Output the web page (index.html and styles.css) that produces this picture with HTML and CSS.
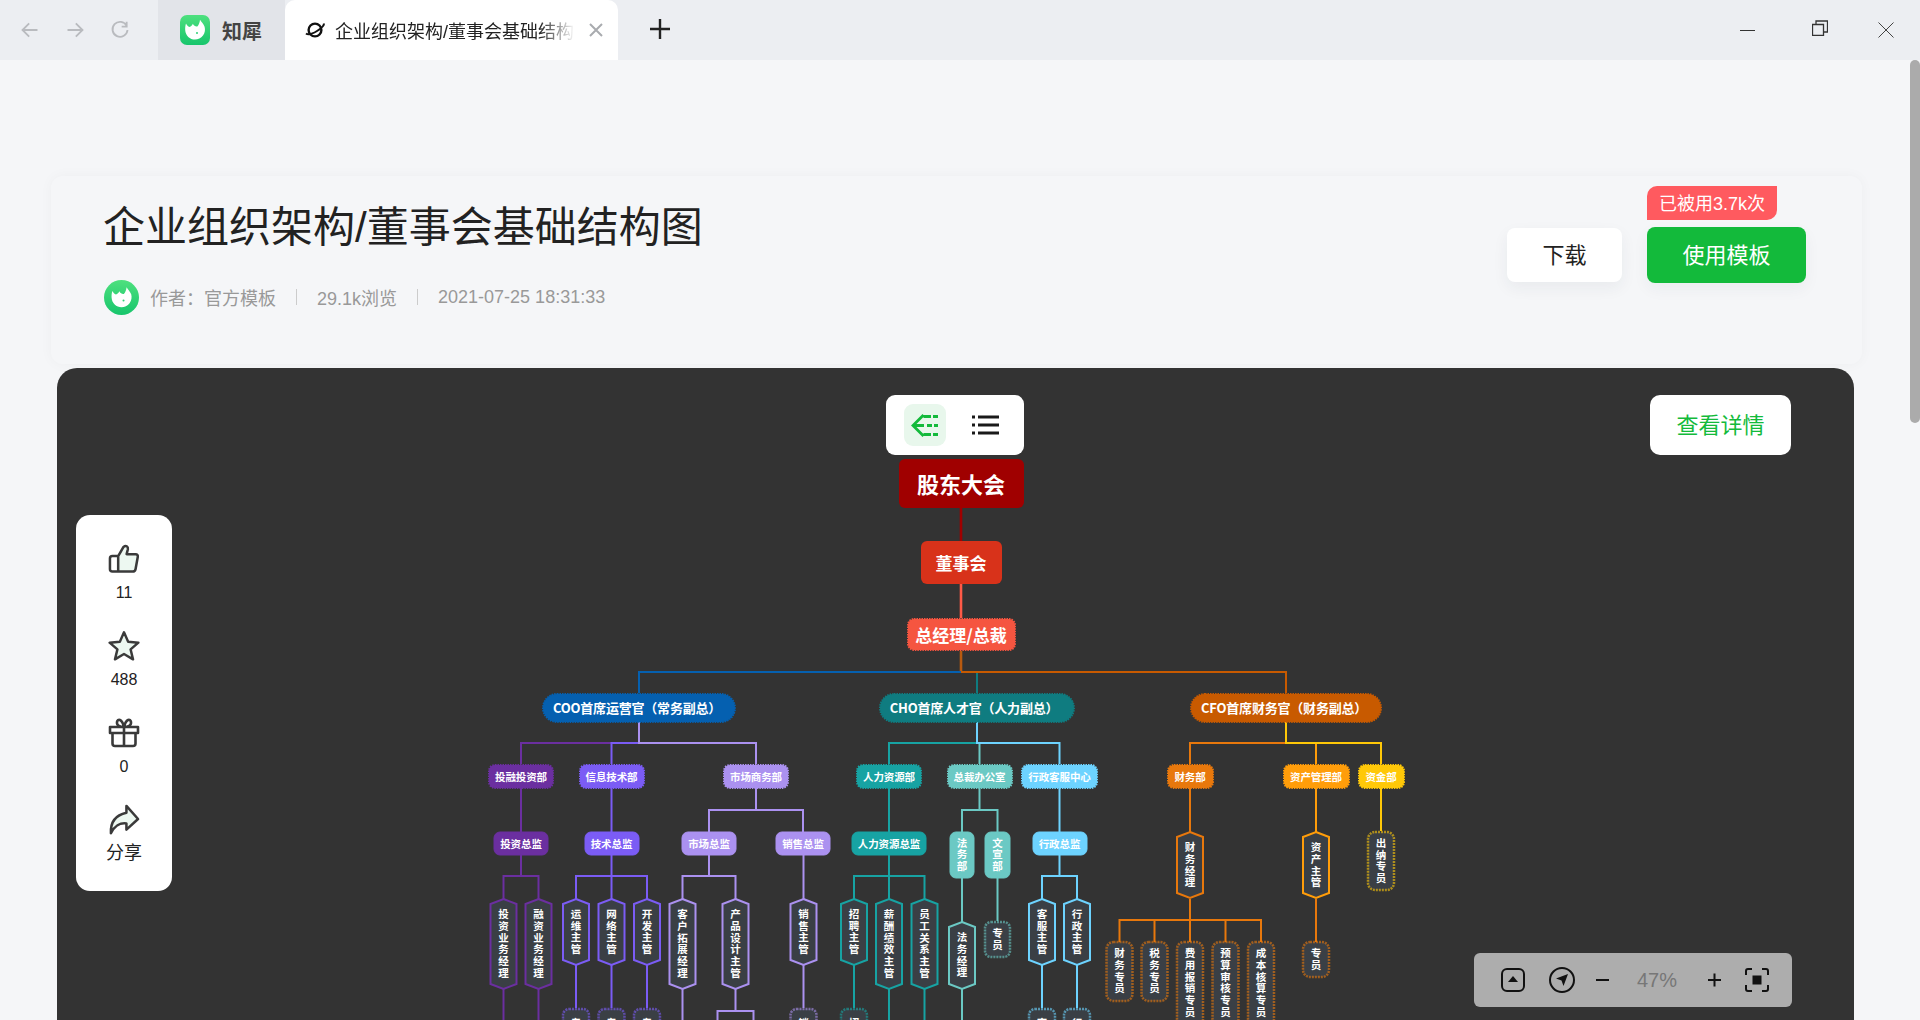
FILE: index.html
```html
<!DOCTYPE html>
<html lang="zh-CN">
<head>
<meta charset="utf-8">
<title>企业组织架构/董事会基础结构图</title>
<link rel="stylesheet" href="styles.css">
</head>
<body>
<svg class="defs" width="0" height="0" aria-hidden="true">
  <defs>
    <linearGradient id="lg" x1="0" y1="0" x2="0" y2="1"><stop offset="0" stop-color="#4ee07e"/><stop offset="1" stop-color="#17c56c"/></linearGradient>
    <symbol id="rhino" viewBox="0 0 30 30">
      <path fill="#fff" d="M6 8.500 C7 10.500 8 11.500 9.500 12 C11 11.500 12.200 10.500 12.800 8.800 C14 10.800 15.500 11.800 17.300 11.500 C18.800 10 19.800 7.500 20 4.800 C21.500 7 23.600 9.200 24.600 11.800 C25.400 14.600 25 18 23 20.600 C21 23.200 18 24.600 15 24.600 C10 24.600 5.400 20.600 5.200 15 C5.100 12.800 5.300 10.500 6 8.500 Z"/>
      <circle cx="17" cy="18" r="1" fill="#2fd278"/>
    </symbol>
  </defs>
</svg>

<header class="tabbar">
  <nav class="nav-btns">
    <svg class="nav-ic" viewBox="0 0 24 24"><path d="M21 12H4M11 4l-8 8 8 8"/></svg>
    <svg class="nav-ic" viewBox="0 0 24 24"><path d="M3 12h17M13 4l8 8-8 8"/></svg>
    <svg class="nav-ic" viewBox="0 0 24 24"><path d="M20 7A9 9 0 1 0 21 12M20 2v6h-6" /></svg>
  </nav>
  <div class="tab tab-home">
    <svg class="tab-logo" viewBox="0 0 30 30"><rect width="30" height="30" rx="7" fill="url(#lg)"/><use href="#rhino" width="30" height="30"/></svg>
    <span class="tab-home-label">知犀</span>
  </div>
  <div class="tab tab-active">
    <svg class="tab-fav" viewBox="0 0 20 20"><ellipse cx="10" cy="10" rx="6.400" ry="6.400" fill="none" stroke="#111" stroke-width="2.400"/><path d="M1 13.500C3 15 8 13.500 12 11s7-5.500 7-7.500" fill="none" stroke="#111" stroke-width="2"/></svg>
    <span class="tab-title">企业组织架构/董事会基础结构图</span>
    <svg class="tab-close" viewBox="0 0 14 14"><path d="M1 1l12 12M13 1L1 13"/></svg>
  </div>
  <svg class="tab-new" viewBox="0 0 20 20"><path d="M10 0v20M0 10h20"/></svg>
  <div class="win-btns">
    <svg class="win-ic win-min" viewBox="0 0 16 16"><path d="M0 8.500h15"/></svg>
    <svg class="win-ic win-restore" viewBox="0 0 16 16"><path d="M.5 4.500h11v11H.5zM4 4.500V1h11.500v11H11.500"/></svg>
    <svg class="win-ic win-close" viewBox="0 0 16 16"><path d="M.5.500l15 15M15.500.500l-15 15"/></svg>
  </div>
</header>

<main class="page">
  <section class="head-card">
    <div class="head-info">
      <h1 class="head-title">企业组织架构/董事会基础结构图</h1>
      <div class="meta">
        <svg class="meta-avatar" viewBox="0 0 30 30"><circle cx="15" cy="15" r="15" fill="url(#lg)"/><use href="#rhino" x="2" y="2" width="26" height="26"/></svg>
        <span>作者：官方模板</span><i class="meta-sep"></i><span>29.1k浏览</span><i class="meta-sep"></i><span class="meta-date">2021-07-25 18:31:33</span>
      </div>
    </div>
    <div class="head-actions">
      <button class="btn btn-plain">下载</button>
      <div class="use-wrap">
        <span class="used-badge">已被用3.7k次</span>
        <button class="btn btn-green">使用模板</button>
      </div>
    </div>
  </section>

  <section class="stage">
    <svg class="map" viewBox="57 368 1797 652" width="1797" height="652">
      <defs>
        <polygon id="h66" points="0,0 13,5 13,61 0,66 -13,61 -13,5"/>
        <polygon id="h90" points="0,0 13,5 13,85 0,90 -13,85 -13,5"/>
      </defs>

      <!-- connectors -->
      <path class="ln w3" stroke="#a00000" d="M961 508V541"/>
      <path class="ln w3" stroke="#ff5a47" d="M961 584V618"/>
      <path class="ln w3" stroke="#b85a10" d="M961 651V672"/>
      <path class="ln" stroke="#0560b0" d="M961 672H639V693"/>
      <path class="ln" stroke="#0f7c80" d="M961 672H977V693"/>
      <path class="ln" stroke="#c85a00" d="M961 672H1286V693"/>

      <path class="ln" stroke="#6b2fa0" d="M639 743H521V764"/>
      <path class="ln" stroke="#7b5cf5" d="M639 743H611.500V764"/>
      <path class="ln" stroke="#ab91f0" d="M639 722V743H756V764"/>
      <path class="ln" stroke="#6b2fa0" d="M521 788V832M521 855V876H503.500V899M521 876H538.500V899M503.500 989V1020M538.500 989V1020"/>
      <path class="ln" stroke="#7b5cf5" d="M611.500 788V832M611.500 855V899M611.500 876H576V899M611.500 876H647V899M576 965V1008M611.500 965V1008M647 965V1008"/>
      <path class="ln" stroke="#ab91f0" d="M756 788V810H709V832M756 810H803V832M709 855V876H682.500V899M709 876H735.500V899M803.500 855V899M682.500 989V1020M735.500 989V1011M717.500 1020V1011H753.500V1020M803.500 965V1008"/>

      <path class="ln" stroke="#17a3a3" d="M977 743H889V764M889 788V832M889 855V899M889 876H854V899M889 876H924.500V899M854 965V1008M889 989V1020M924.500 989V1020"/>
      <path class="ln" stroke="#6bc9c4" d="M979.500 743V764M979.500 788V810H962V832M979.500 810H997.500V832M962 878V922M997.500 878V921M962 989V1020"/>
      <path class="ln" stroke="#6dd3ff" d="M977 722V743H1059.500V764M1059.500 788V832M1059.500 855V876H1042V899M1059.500 876H1077V899M1042 965V1008M1077 965V1008"/>

      <path class="ln" stroke="#e8780c" d="M1286 743H1190V764M1190 788V832M1190 899V942M1190 920H1119.500V942M1190 920H1261V942M1154.500 920V942M1225.500 920V942M1316 899V942"/>
      <path class="ln" stroke="#ff9d0a" d="M1316 743V764M1316 788V832"/>
      <path class="ln" stroke="#ffc808" d="M1286 722V743H1381V764M1381 788V831"/>

      <!-- level 0–2 -->
      <rect class="box" fill="#a00000" x="899" y="459" width="125" height="49" rx="6"/>
      <text class="t22" x="961" y="483">股东大会</text>
      <rect class="box" fill="#d8321a" x="921" y="541" width="81" height="43" rx="6"/>
      <text class="t17" x="961" y="562">董事会</text>
      <rect class="box dot" fill="#f55540" stroke="#f55540" x="908" y="619" width="107" height="31" rx="6"/>
      <text class="t17" x="961" y="634.500">总经理/总裁</text>

      <rect class="box dot" fill="#0560b0" stroke="#0560b0" x="543" y="694" width="192" height="28" rx="14"/>
      <text class="t13" x="637" y="707">COO首席运营官（常务副总）</text>
      <rect class="box dot" fill="#0f7c80" stroke="#0f7c80" x="880" y="694" width="194" height="28" rx="14"/>
      <text class="t13" x="974" y="707">CHO首席人才官（人力副总）</text>
      <rect class="box dot" fill="#c85a00" stroke="#c85a00" x="1191" y="694" width="190" height="28" rx="14"/>
      <text class="t13" x="1284" y="707">CFO首席财务官（财务副总）</text>

      <!-- departments -->
      <g class="c-p1">
        <rect class="box dot tint" x="489" y="765" width="64" height="23" rx="6"/><text class="t10" x="521" y="776">投融投资部</text>
        <rect class="box tint" x="494" y="832" width="54" height="23" rx="6"/><text class="t10" x="521" y="843">投资总监</text>
        <use href="#h90" x="503.500" y="899" class="hex"/><text class="tv" x="503.500" y="944">投资业务经理</text>
        <use href="#h90" x="538.500" y="899" class="hex"/><text class="tv" x="538.500" y="944">融资业务经理</text>
      </g>
      <g class="c-p2">
        <rect class="box dot tint" x="580" y="765" width="64" height="23" rx="6"/><text class="t10" x="611.500" y="776">信息技术部</text>
        <rect class="box tint" x="585" y="832" width="54" height="23" rx="6"/><text class="t10" x="611.500" y="843">技术总监</text>
        <use href="#h66" x="576" y="899" class="hex"/><text class="tv" x="576" y="932">运维主管</text>
        <use href="#h66" x="611.500" y="899" class="hex"/><text class="tv" x="611.500" y="932">网络主管</text>
        <use href="#h66" x="647" y="899" class="hex"/><text class="tv" x="647" y="932">开发主管</text>
        <rect class="box dot leaf" x="563" y="1009" width="26" height="40" rx="6"/><text class="tv" x="576" y="1029">专员</text>
        <rect class="box dot leaf" x="598.500" y="1009" width="26" height="40" rx="6"/><text class="tv" x="611.500" y="1029">专员</text>
        <rect class="box dot leaf" x="634" y="1009" width="26" height="40" rx="6"/><text class="tv" x="647" y="1029">专员</text>
      </g>
      <g class="c-p3">
        <rect class="box dot tint" x="724" y="765" width="64" height="23" rx="6"/><text class="t10" x="756" y="776">市场商务部</text>
        <rect class="box tint" x="682" y="832" width="54" height="23" rx="6"/><text class="t10" x="709" y="843">市场总监</text>
        <rect class="box tint" x="776" y="832" width="54" height="23" rx="6"/><text class="t10" x="803" y="843">销售总监</text>
        <use href="#h90" x="682.500" y="899" class="hex"/><text class="tv" x="682.500" y="944">客户拓展经理</text>
        <use href="#h90" x="735.500" y="899" class="hex"/><text class="tv" x="735.500" y="944">产品设计主管</text>
        <use href="#h66" x="803.500" y="899" class="hex"/><text class="tv" x="803.500" y="932">销售主管</text>
        <rect class="box dot leaf" x="790.500" y="1009" width="26" height="40" rx="6"/><text class="tv" x="803.500" y="1029">销售</text>
      </g>
      <g class="c-t1">
        <rect class="box dot tint" x="857" y="765" width="64" height="23" rx="6"/><text class="t10" x="889" y="776">人力资源部</text>
        <rect class="box tint" x="852" y="832" width="74" height="23" rx="6"/><text class="t10" x="889" y="843">人力资源总监</text>
        <use href="#h66" x="854" y="899" class="hex"/><text class="tv" x="854" y="932">招聘主管</text>
        <use href="#h90" x="889" y="899" class="hex"/><text class="tv" x="889" y="944">薪酬绩效主管</text>
        <use href="#h90" x="924.500" y="899" class="hex"/><text class="tv" x="924.500" y="944">员工关系主管</text>
        <rect class="box dot leaf" x="841" y="1009" width="26" height="40" rx="6"/><text class="tv" x="854" y="1029">招聘</text>
      </g>
      <g class="c-t2">
        <rect class="box dot tint" x="948" y="765" width="64" height="23" rx="6"/><text class="t10" x="979.500" y="776">总裁办公室</text>
        <rect class="box tint" x="950" y="832" width="24" height="46" rx="6"/><text class="tv" x="962" y="855">法务部</text>
        <rect class="box tint" x="985" y="832" width="25" height="46" rx="6"/><text class="tv" x="997.500" y="855">文宣部</text>
        <polygon class="hex" points="962,922 975,927 975,984 962,989 949,984 949,927"/><text class="tv" x="962" y="955.500">法务经理</text>
        <rect class="box dot leaf" x="985" y="922" width="25" height="35" rx="6"/><text class="tv" x="997.500" y="939.500">专员</text>
      </g>
      <g class="c-t3">
        <rect class="box dot tint" x="1022" y="765" width="75" height="23" rx="6"/><text class="t10" x="1059.500" y="776">行政客服中心</text>
        <rect class="box tint" x="1033" y="832" width="54" height="23" rx="6"/><text class="t10" x="1059.500" y="843">行政总监</text>
        <use href="#h66" x="1042" y="899" class="hex"/><text class="tv" x="1042" y="932">客服主管</text>
        <use href="#h66" x="1077" y="899" class="hex"/><text class="tv" x="1077" y="932">行政主管</text>
        <rect class="box dot leaf" x="1029" y="1009" width="26" height="40" rx="6"/><text class="tv" x="1042" y="1029">客服</text>
        <rect class="box dot leaf" x="1064" y="1009" width="26" height="40" rx="6"/><text class="tv" x="1077" y="1029">行政</text>
      </g>
      <g class="c-o1">
        <rect class="box dot tint" x="1168" y="765" width="45" height="23" rx="6"/><text class="t10" x="1190" y="776">财务部</text>
        <use href="#h66" x="1190" y="832" class="hex"/><text class="tv" x="1190" y="865.500">财务经理</text>
        <rect class="box dot leaf" x="1106.500" y="942" width="26" height="59" rx="7"/><text class="tv" x="1119.500" y="971.500">财务专员</text>
        <rect class="box dot leaf" x="1141.500" y="942" width="26" height="59" rx="7"/><text class="tv" x="1154.500" y="971.500">税务专员</text>
        <rect class="box dot leaf" x="1177" y="942" width="26" height="84" rx="7"/><text class="tv" x="1190" y="983">费用报销专员</text>
        <rect class="box dot leaf" x="1212.500" y="942" width="26" height="84" rx="7"/><text class="tv" x="1225.500" y="983">预算审核专员</text>
        <rect class="box dot leaf" x="1248" y="942" width="26" height="84" rx="7"/><text class="tv" x="1261" y="983">成本核算专员</text>
        <rect class="box dot leaf" x="1303" y="942" width="26" height="35" rx="7"/><text class="tv" x="1316" y="959.500">专员</text>
      </g>
      <g class="c-o2">
        <rect class="box dot tint" x="1284" y="765" width="65" height="23" rx="6"/><text class="t10" x="1316" y="776">资产管理部</text>
        <use href="#h66" x="1316" y="832" class="hex"/><text class="tv" x="1316" y="865.500">资产主管</text>
      </g>
      <g class="c-o3">
        <rect class="box dot tint" x="1359" y="765" width="45" height="23" rx="6"/><text class="t10" x="1381" y="776">资金部</text>
        <rect class="box dot leaf" x="1368" y="832" width="26" height="58" rx="7"/><text class="tv" x="1381" y="861">出纳专员</text>
      </g>
    </svg>

    <div class="stage-top">
      <div class="view-switch">
        <span class="view-tile view-on">
          <svg class="view-ic" viewBox="0 0 26 21"><path stroke="#13ba3b" d="M11.500 0 1 10.500 11.500 21M1 10.500h11M15 10.500h5M22 10.500h4M11.500 1.500h7.500M21 1.500h5M11.500 19.500h7.500M21 19.500h5"/></svg>
        </span>
        <span class="view-tile">
          <svg class="view-ic view-ic-list" viewBox="0 0 27 20"><path stroke="#1a1a1a" d="M0 2h3M6 2h21M0 10h3M6 10h21M0 18h3M6 18h21"/></svg>
        </span>
      </div>
      <button class="btn-detail">查看详情</button>
    </div>

    <aside class="side">
      <div class="side-item">
        <svg class="side-ic" viewBox="0 0 32 32"><path fill="#edf8f1" d="M11 13 16 3c2.500-1 4 1 3.500 3L18 11h10c1.500 0 2 1.500 1.700 3l-2.300 13c-.3 1.500-1 2-2.500 2H11z"/><path class="ic-line" d="M10 13.500 15.500 4c2.500-2 5-.5 4.500 2.500L18.700 11.500H28c1.700 0 2.500 1.300 2.200 3l-2.300 12.500c-.3 1.500-1.300 2.500-3 2.500H4c-1.700 0-2.500-1-2.500-2.500v-11C1.500 14.500 2.500 13.500 4 13.500h6zM10 13.500v16"/></svg>
        <span class="side-num">11</span>
      </div>
      <div class="side-item">
        <svg class="side-ic" viewBox="0 0 34 32"><path fill="#edf8f1" stroke="#3a3a3a" stroke-width="2.600" stroke-linejoin="round" d="M17 2l4.400 10 10.900 1-8.300 7.100 2.600 10.600L17 25.100 7.400 30.700 10 20.100 1.700 13 12.600 12z"/></svg>
        <span class="side-num">488</span>
      </div>
      <div class="side-item">
        <svg class="side-ic" viewBox="0 0 32 30"><path class="ic-line" d="M2 9.500h28v6H2zM4.500 15.500V26c0 1.500 1 2.500 2.500 2.500h18c1.500 0 2.500-1 2.500-2.500V15.500M16 9.500v19M16 9.500C12 9.500 8.500 8 9 4.500c.5-3.500 5-3.500 7 5 2-8.500 6.500-8.500 7-5 .5 3.500-3 5-7 5z"/></svg>
        <span class="side-num">0</span>
      </div>
      <div class="side-item">
        <svg class="side-ic" viewBox="0 0 32 32"><path fill="#edf8f1" stroke="#3a3a3a" stroke-width="2.600" stroke-linejoin="round" d="M18.500 2 30.500 15.500 18.500 26.500V20C12 19 6 23 2.500 30c-.5-9 2.500-18 16-21z"/></svg>
        <span class="side-share">分享</span>
      </div>
    </aside>

    <div class="zoom-bar">
      <svg class="zb-ic" viewBox="0 0 24 24"><rect x="1" y="1" width="22" height="22" rx="5" class="zb-line"/><path d="M12 8l5 6H7z" fill="#111"/></svg>
      <svg class="zb-ic zb-compass" viewBox="0 0 26 26"><circle cx="13" cy="13" r="12" class="zb-line"/><path d="M19 7l-4.500 12-2-5.500-5.500-2z" fill="#111"/></svg>
      <svg class="zb-sm" viewBox="0 0 14 14"><path class="zb-line" d="M0 7h13"/></svg>
      <span class="zb-val">47%</span>
      <svg class="zb-sm" viewBox="0 0 14 14"><path class="zb-line" d="M0 7h13M6.500 .5v13"/></svg>
      <svg class="zb-ic" viewBox="0 0 24 24"><path class="zb-line" d="M1 7V3c0-1 1-2 2-2h4M17 1h4c1 0 2 1 2 2v4M23 17v4c0 1-1 2-2 2h-4M7 23H3c-1 0-2-1-2-2v-4"/><rect x="7.500" y="7.500" width="9" height="9" fill="#111"/></svg>
    </div>
  </section>
  <div class="scroll-thumb"></div>
</main>
</body>
</html>
```
FILE: styles.css
```css
* { box-sizing: border-box; }
html, body { margin: 0; height: 1020px; overflow: hidden; }
body {
  background: #f5f6f8;
  color: #222;
  font-family: "Liberation Sans", "Noto Sans CJK SC", sans-serif;
  display: flex;
  flex-direction: column;
}
.defs { position: absolute; }

/* browser chrome */
.tabbar { height: 60px; flex: none; background: #eceef2; display: flex; align-items: stretch; }
.nav-btns { width: 158px; display: flex; align-items: center; gap: 25px; padding-left: 20px; }
.nav-ic { width: 20px; height: 20px; fill: none; stroke: #b9bbbf; stroke-width: 2.200; }
.tab { display: flex; align-items: center; }
.tab-home { width: 127px; background: #e2e4e9; padding-left: 22px; gap: 12px; }
.tab-logo { width: 30px; height: 30px; }
.tab-home-label { font-size: 20px; font-weight: 700; color: #444; }
.tab-active { width: 333px; background: #fff; border-radius: 10px 10px 0 0; padding-left: 20px; position: relative; }
.tab-fav { width: 20px; height: 20px; flex: none; }
.tab-title {
  width: 240px; margin-left: 10px; font-size: 18px; white-space: nowrap; overflow: hidden; color: #222;
  -webkit-mask-image: linear-gradient(90deg, #000 85%, transparent);
  mask-image: linear-gradient(90deg, #000 85%, transparent);
}
.tab-close { width: 14px; height: 14px; margin-left: 14px; fill: none; stroke: #a9abaf; stroke-width: 2; }
.tab-new { width: 20px; height: 20px; margin: 19px 0 0 32px; fill: none; stroke: #222; stroke-width: 2.400; }
.win-btns { margin-left: auto; display: flex; align-items: center; gap: 50px; padding-right: 26px; }
.win-ic { width: 16px; height: 16px; fill: none; stroke: #333; stroke-width: 1; }
.win-min { margin-right: 6px; }
.win-restore { margin-top: -5px; stroke-width: 1.300; }
.win-close { stroke: #444; }

/* page */
.page { flex: 1; min-height: 0; display: flex; flex-direction: column; padding: 0 66px 0 57px; position: relative; }
.head-card {
  height: 188px; flex: none; margin: 116px -8px 0 -6px; padding: 0 56px 0 52px;
  display: flex; align-items: flex-start; justify-content: space-between;
  border-radius: 12px; box-shadow: 0 0 14px rgba(40, 50, 70, .035);
}
.head-title { margin: 0; padding-top: 23px; font-size: 42px; line-height: 58px; font-weight: 400; color: #222; white-space: nowrap; }
.meta { display: flex; align-items: center; margin-top: 22px; font-size: 18px; color: #999; height: 36px; }
.meta-avatar { width: 35px; height: 35px; margin: 0 11px 0 1px; }
.meta-date { padding-top: 1px; }
.meta-sep { width: 1px; height: 16px; background: #ccc; margin: 0 20px; }
.head-actions { display: flex; align-items: flex-end; gap: 25px; padding-top: 10px; }
.btn { border: 0; font-family: inherit; font-size: 22px; border-radius: 8px; padding: 0 0 4px; }
.btn-plain { width: 115px; height: 54px; background: #fff; color: #222; margin-bottom: 1px; box-shadow: 0 6px 16px rgba(40, 50, 70, .06); }
.use-wrap { display: flex; flex-direction: column; align-items: flex-start; gap: 7px; }
.used-badge {
  height: 34px; padding: 0 12px 3px; display: flex; align-items: center; background: #ff5a5f; color: #fff;
  font-size: 18px; border-radius: 10px 0 10px 0;
}
.btn-green { width: 159px; height: 56px; background: #13ba3b; color: #fff; box-shadow: 0 6px 16px rgba(40, 50, 70, .05); }

/* dark stage */
.stage { flex: 1; min-height: 0; width: 1797px; background: #333; border-radius: 20px 20px 0 0; position: relative; overflow: hidden; margin-top: 4px; }
.map { position: absolute; left: 0; top: 0; display: block; }
.stage-top { position: absolute; left: 829px; right: 63px; top: 27px; display: flex; justify-content: space-between; align-items: flex-start; }
.view-switch { width: 138px; height: 60px; background: #fff; border-radius: 9px; display: flex; align-items: center; gap: 18px; padding-left: 18px; }
.view-tile { width: 42px; height: 42px; border-radius: 9px; display: flex; align-items: center; justify-content: center; }
.view-on { background: #e8f7ec; }
.view-ic { width: 26px; height: 21px; fill: none; stroke-width: 2.800; overflow: visible; }
.view-ic-list { width: 27px; height: 20px; }
.btn-detail { width: 141px; height: 60px; border: 0; border-radius: 10px; background: #fff; color: #13ba3b; font-size: 22px; font-family: inherit; padding: 0 0 4px; }

.side { position: absolute; left: 19px; top: 147px; width: 96px; height: 376px; background: #fff; border-radius: 14px; display: flex; flex-direction: column; align-items: center; padding-top: 28px; }
.side-item { height: 87px; display: flex; flex-direction: column; align-items: center; }
.side-ic { width: 32px; height: 31px; }
.ic-line { fill: none; stroke: #3a3a3a; stroke-width: 2.600; stroke-linejoin: round; }
.side-num { font-size: 16px; line-height: 20px; margin-top: 9px; color: #222; }
.side-share { font-size: 18px; line-height: 22px; margin-top: 7px; color: #222; }

.zoom-bar { position: absolute; left: 1417px; top: 585px; width: 318px; height: 54px; background: #adadad; border-radius: 6px; display: flex; align-items: center; padding-left: 27px; }
.zb-ic { width: 24px; height: 24px; flex: none; }
.zb-compass { width: 26px; height: 26px; margin-left: 24px; }
.zb-line { fill: none; stroke: #111; stroke-width: 2; }
.zb-sm { width: 14px; height: 14px; flex: none; margin-left: 21px; }
.zb-val { width: 42px; margin-left: 27px; font-size: 20px; color: #777; white-space: nowrap; }
.zb-val + .zb-sm { margin-left: 29px; }
.zb-sm + .zb-ic { margin-left: 23px; }

.scroll-thumb { position: absolute; right: 0; top: 0; width: 10px; height: 363px; background: #ababab; border-radius: 5px; }

/* mind map */
.map text { font-family: "Noto Sans CJK SC", sans-serif; font-weight: 700; fill: #fff; text-anchor: middle; dominant-baseline: central; }
.map .t22 { font-size: 22px; }
.map .t17 { font-size: 17px; }
.map .t13 { font-size: 13px; letter-spacing: -.2px; }
.map .t10 { font-size: 10.500px; letter-spacing: -.1px; }
.map .tv { font-size: 10.500px; writing-mode: vertical-rl; text-orientation: upright; letter-spacing: 1.200px; }
.ln { fill: none; stroke-width: 2; }
.w3 { stroke-width: 2.600; }
.dot { stroke-width: 2; stroke-dasharray: 1.500 1; }
.c-p1 { --c: #6b2fa0; }
.c-p2 { --c: #7b5cf5; }
.c-p3 { --c: #ab91f0; }
.c-t1 { --c: #17a3a3; }
.c-t2 { --c: #6bc9c4; }
.c-t3 { --c: #6dd3ff; }
.c-o1 { --c: #e8780c; }
.c-o2 { --c: #ff9d0a; }
.c-o3 { --c: #ffc808; }
.tint { fill: var(--c); stroke: var(--c); }
.hex { fill: #3a3f45; stroke: var(--c); stroke-width: 2; }
.leaf { fill: #3a3f45; stroke: var(--c); stroke-opacity: .6; stroke-width: 2.500; stroke-dasharray: 2 1; }
```
